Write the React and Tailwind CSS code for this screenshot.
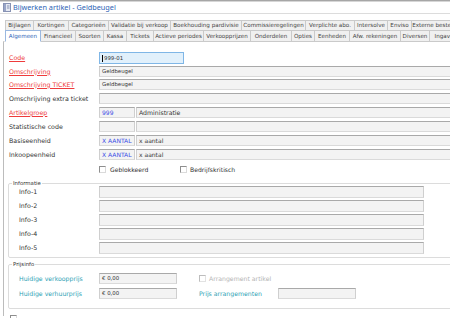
import React from 'react'

const row1 = [
    { label: 'Bijlagen', w: 'w-[29px]' },
    { label: 'Kortingen', w: 'w-[36px]' },
    { label: 'Categorieën', w: 'w-[41px]' },
    { label: 'Validatie bij verkoop', w: 'w-[63px]' },
    { label: 'Boekhouding pardivisie', w: 'w-[72px]' },
    { label: 'Commissieregelingen', w: 'w-[65px]' },
    { label: 'Verplichte abo.', w: 'w-[50px]' },
    { label: 'Intersolve', w: 'w-[34px]' },
    { label: 'Enviso', w: 'w-[25px]' },
    { label: 'Externe bestellingen', w: 'w-[60px]' },
]

const row2 = [
    { label: 'Algemeen', w: 'w-[36px]', active: true },
    { label: 'Financieel', w: 'w-[36px]' },
    { label: 'Soorten', w: 'w-[29px]' },
    { label: 'Kassa', w: 'w-[24px]' },
    { label: 'Tickets', w: 'w-[28px]' },
    { label: 'Actieve periodes', w: 'w-[51px]' },
    { label: 'Verkoopprijzen', w: 'w-[48px]' },
    { label: 'Onderdelen', w: 'w-[42px]' },
    { label: 'Opties', w: 'w-[24px]' },
    { label: 'Eenheden', w: 'w-[36px]' },
    { label: 'Afw. rekeningen', w: 'w-[52px]' },
    { label: 'Diversen', w: 'w-[30px]' },
    { label: 'Ingave', w: 'w-[30px]' },
]

const font = "font-['DejaVu_Sans',sans-serif]"
const input = 'border border-[#cfcfcf] border-t-[#a9a9a9] border-b-[#dadada] bg-[#f3f3f3] flex items-center pl-[2px] text-[#333] overflow-hidden whitespace-nowrap'

function Tab({ label, w, active }) {
    return (
        <div
            className={`${w} shrink-0 -ml-px border flex items-center justify-center overflow-hidden whitespace-nowrap text-[5.6px] ${
                active
                    ? 'bg-white text-[#2b62b8] border-[#9ab8e0] border-b-white relative'
                    : 'bg-[#f0f0f0] text-[#444] border-[#cacaca]'
            }`}
        >
            {label}
        </div>
    )
}

function Check() {
    return <div className="w-[7px] h-[7px] shrink-0 border border-[#dadada] border-t-[#8e8e8e] border-l-[#8e8e8e] bg-white" />
}

function FormRow({ label, red, h = 'h-[11px]', mt, children }) {
    return (
        <div className={`flex ${h} ${mt}`}>
            <div className="w-[95px] pl-[5px] flex items-center text-[6.3px] whitespace-nowrap">
                {red ? (
                    <span className="text-[#ee3b3b] underline">{label}</span>
                ) : (
                    <span className="text-[#333]">{label}</span>
                )}
            </div>
            {children}
        </div>
    )
}

export default function App() {
    return (
        <div className={`w-[450px] h-[318px] overflow-hidden bg-white ${font}`}>
            <div className="h-[1px] bg-[#a6a6a6]" />
            <div className="h-[1px] bg-[#d6d6d6]" />

            {/* title */}
            <div className="h-[12px] flex items-center pl-[3px] gap-[2px] border-b border-[#dcdcdc]">
                <svg width="8" height="9" viewBox="0 0 8 9">
                    <rect x="0.5" y="0.5" width="7" height="8" fill="#e4e8f2" stroke="#8792b3" />
                    <rect x="1" y="1" width="2" height="7" fill="#9aa6c8" />
                    <line x1="4" y1="3" x2="6.5" y2="3" stroke="#8792b3" />
                    <line x1="4" y1="5" x2="6.5" y2="5" stroke="#8792b3" />
                </svg>
                <span className="font-['Noto_Sans',sans-serif] text-[7.3px] text-[#2d64b5] leading-none">
                    Bijwerken artikel - Geldbeugel
                </span>
            </div>

            {/* tabs */}
            <div className="mt-[6px] pl-[6px]">
                <div className="flex h-[11px]">
                    {row1.map((t) => <Tab key={t.label} {...t} />)}
                </div>
                <div className="flex h-[12px] -mt-px">
                    {row2.map((t) => <Tab key={t.label} {...t} />)}
                </div>
            </div>

            {/* panel */}
            <div className="ml-[3px] border-l border-[#bcbcbc] h-[275px] -mt-px border-t border-t-[#e2e2e2]">
                <div className="flex flex-col pt-[10px]">
                    <FormRow label="Code" red h="h-[12px]">
                        <div className="w-[85px] border border-[#7fb6e6] bg-[#e1f0fb] flex items-center pl-[2px] text-[5.4px] text-[#333]">
                            <span className="w-px h-[7px] bg-black mr-[1px]" />
                            999-01
                        </div>
                    </FormRow>
                    <FormRow label="Omschrijving" red mt="mt-[2px]">
                        <div className={`flex-1 -mr-[4px] text-[5.4px] ${input}`}>Geldbeugel</div>
                    </FormRow>
                    <FormRow label="Omschrijving TICKET" red mt="mt-[2px]">
                        <div className={`flex-1 -mr-[4px] text-[5.4px] ${input}`}>Geldbeugel</div>
                    </FormRow>
                    <FormRow label="Omschrijving extra ticket" mt="mt-[3px]">
                        <div className={`flex-1 -mr-[4px] ${input}`} />
                    </FormRow>
                    <FormRow label="Artikelgroep" red mt="mt-[3px]">
                        <div className={`w-[36px] text-[6px] !text-[#3b4ee6] ${input}`}>999</div>
                        <div className={`flex-1 ml-[1px] -mr-[4px] text-[6.2px] ${input}`}>Administratie</div>
                    </FormRow>
                    <FormRow label="Statistische code" mt="mt-[3px]">
                        <div className={`w-[36px] ${input}`} />
                        <div className={`flex-1 ml-[1px] -mr-[4px] ${input}`} />
                    </FormRow>
                    <FormRow label="Basiseenheid" mt="mt-[3px]">
                        <div className={`w-[36px] text-[6px] !text-[#3b4ee6] ${input}`}>X AANTAL</div>
                        <div className={`flex-1 ml-[1px] -mr-[4px] text-[6px] ${input}`}>x aantal</div>
                    </FormRow>
                    <FormRow label="Inkoopeenheid" mt="mt-[3px]">
                        <div className={`w-[36px] text-[6px] !text-[#3b4ee6] ${input}`}>X AANTAL</div>
                        <div className={`flex-1 ml-[1px] -mr-[4px] text-[6px] ${input}`}>x aantal</div>
                    </FormRow>

                    {/* checkboxes */}
                    <div className="flex items-center h-[7px] mt-[6px] pl-[95px] text-[6.1px] text-[#333]">
                        <Check />
                        <span className="ml-[4px] w-[70px]">Geblokkeerd</span>
                        <Check />
                        <span className="ml-[3px]">Bedrijfskritisch</span>
                    </div>
                </div>

                {/* Informatie */}
                <fieldset className="ml-[4px] -mr-[6px] mt-[6px] border border-[#dcdcdc] rounded-[2px] pb-[3px]">
                    <legend className="ml-[3px] px-[1px] text-[5.4px] leading-[8px] text-[#333]">Informatie</legend>
                    <div className="flex flex-col gap-[2px] -mt-px">
                        {[1, 2, 3, 4, 5].map((n) => (
                            <div key={n} className="flex h-[12px]">
                                <div className="w-[90px] pl-[10px] flex items-center text-[6.3px] text-[#333]">Info-{n}</div>
                                <div className={`w-[325px] ${input}`} />
                            </div>
                        ))}
                    </div>
                </fieldset>

                {/* Prijsinfo */}
                <fieldset className="ml-[4px] -mr-[6px] mt-[2px] border border-[#dcdcdc] rounded-[2px] pb-[9px]">
                    <legend className="ml-[3px] px-[1px] text-[5.4px] leading-[8px] text-[#333]">Prijsinfo</legend>
                    <div className="flex flex-col gap-[4px] pt-[5px] text-[6.2px]">
                        <div className="flex h-[11px]">
                            <div className="w-[90px] pl-[10px] flex items-center text-[#2e9fb5]">Huidige verkoopprijs</div>
                            <div className={`w-[78px] text-[5.4px] ${input}`}>€ 0,00</div>
                            <div className="ml-[22px] flex items-center">
                                <div className="w-[7px] h-[7px] border border-[#e2e2e2] border-t-[#bdbdbd] border-l-[#bdbdbd] bg-white" />
                                <span className="ml-[3px] text-[#b4b4b4]">Arrangement artikel</span>
                            </div>
                        </div>
                        <div className="flex h-[11px]">
                            <div className="w-[90px] pl-[10px] flex items-center text-[#2e9fb5]">Huidige verhuurprijs</div>
                            <div className={`w-[78px] text-[5.4px] ${input}`}>€ 0,00</div>
                            <div className="ml-[22px] w-[79px] flex items-center text-[#2e9fb5]">Prijs arrangementen</div>
                            <div className={`w-[78px] ${input}`} />
                        </div>
                    </div>
                </fieldset>

                <div className="mt-[6px] ml-[6px]">
                    <Check />
                </div>
            </div>
        </div>
    )
}
